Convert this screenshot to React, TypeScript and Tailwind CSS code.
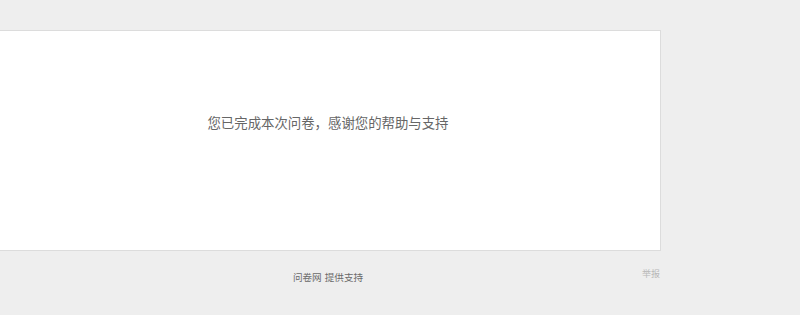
import React from 'react';

const App = () => {
  return (
    <div
      className="min-h-screen w-full overflow-hidden bg-[#eeeeee] pt-[30px]"
      style={{ fontFamily: '"Noto Sans CJK SC", "Liberation Sans", sans-serif' }}
    >
      {/* result card */}
      <div className="ml-[-5px] h-[221px] w-[666px] border border-[#dcdcdc] bg-white pt-[81px] text-center">
        <p className="text-[13.4px] leading-[20px] text-[#666666]">您已完成本次问卷，感谢您的帮助与支持</p>
      </div>

      {/* footer */}
      <div className="ml-[-5px] grid w-[666px] grid-cols-3 pt-[16px]">
        <div></div>
        <div className="flex justify-center gap-[3px] pt-[3px] text-[9.6px] leading-[14px] text-[#6a6a6a]">
          <span>问卷网</span>
          <span>提供支持</span>
        </div>
        <div className="pr-[1px] text-right text-[9px] leading-[14px] text-[#b8b8b8]">举报</div>
      </div>
    </div>
  );
};

export default App;
